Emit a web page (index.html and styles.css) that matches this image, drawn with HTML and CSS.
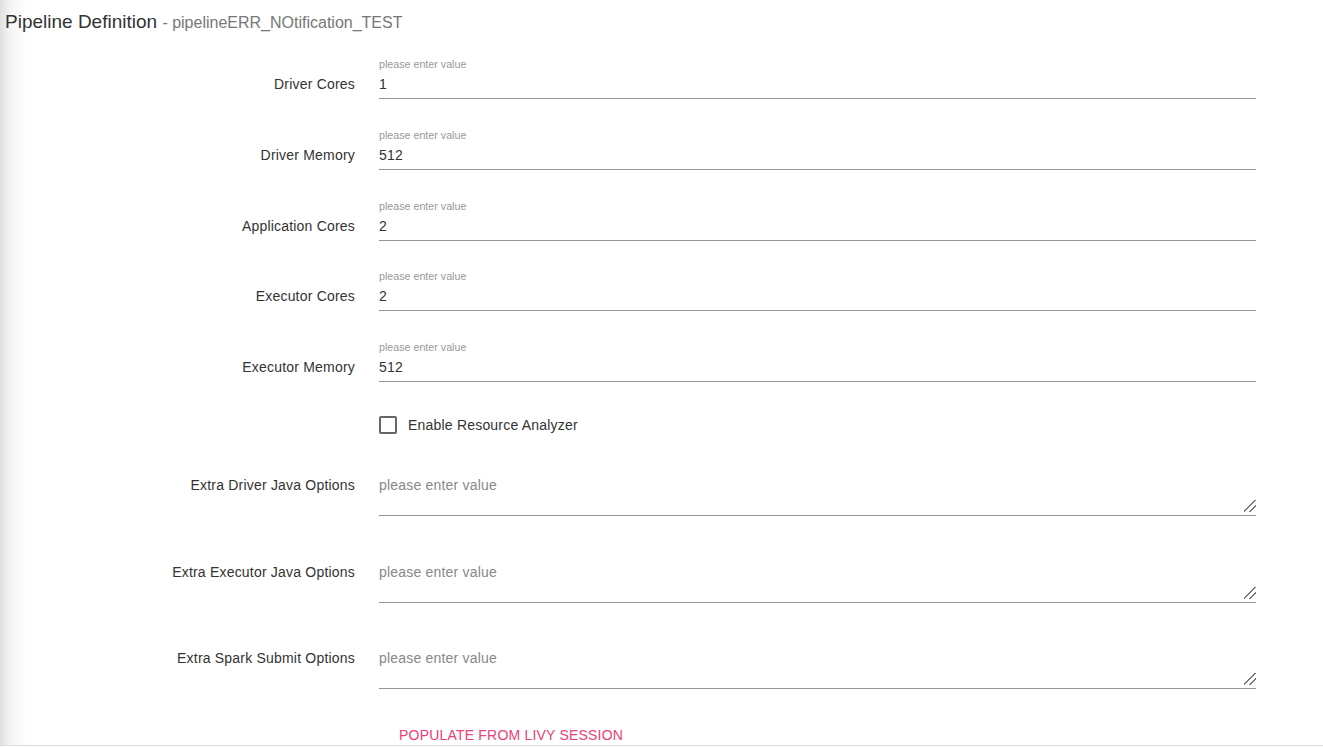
FILE: index.html
```html
<!DOCTYPE html>
<html>
<head>
<meta charset="utf-8">
<link rel="stylesheet" href="styles.css">
</head>
<body>
<div class="page">
  <div class="main">
    <h1 class="title">Pipeline Definition <span class="subtitle">- pipelineERR_NOtification_TEST</span></h1>
    <div class="form">
      <div class="row">
        <label class="label">Driver Cores</label>
        <div class="field">
          <div class="helper">please enter value</div>
          <div class="input">1</div>
        </div>
      </div>
      <div class="row">
        <label class="label">Driver Memory</label>
        <div class="field">
          <div class="helper">please enter value</div>
          <div class="input">512</div>
        </div>
      </div>
      <div class="row">
        <label class="label">Application Cores</label>
        <div class="field">
          <div class="helper">please enter value</div>
          <div class="input">2</div>
        </div>
      </div>
      <div class="row">
        <label class="label">Executor Cores</label>
        <div class="field">
          <div class="helper">please enter value</div>
          <div class="input">2</div>
        </div>
      </div>
      <div class="row">
        <label class="label">Executor Memory</label>
        <div class="field">
          <div class="helper">please enter value</div>
          <div class="input">512</div>
        </div>
      </div>
      <div class="row check-row">
        <span></span>
        <div class="check">
          <span class="box"></span>
          <span class="check-label">Enable Resource Analyzer</span>
        </div>
      </div>
      <div class="row area-row">
        <label class="label area-label">Extra Driver Java Options</label>
        <div class="area"><span class="ph">please enter value</span><span class="grip"></span></div>
      </div>
      <div class="row area-row">
        <label class="label area-label">Extra Executor Java Options</label>
        <div class="area"><span class="ph">please enter value</span><span class="grip"></span></div>
      </div>
      <div class="row area-row">
        <label class="label area-label">Extra Spark Submit Options</label>
        <div class="area"><span class="ph">please enter value</span><span class="grip"></span></div>
      </div>
      <div class="row btn-row">
        <span></span>
        <div><button class="btn">POPULATE FROM LIVY SESSION</button></div>
      </div>
    </div>
  </div>
  <div class="footer"></div>
</div>
</body>
</html>
```

FILE: styles.css
```css
html, body {
  margin: 0;
  padding: 0;
}
body {
  font-family: "Liberation Sans", Arial, Helvetica, sans-serif;
  color: #333;
  background: #fff;
}
.page {
  height: 747px;
  display: flex;
  flex-direction: column;
  overflow: hidden;
  background: linear-gradient(to right, #e0e0e0 0px, #f4f4f4 10px, #fcfcfc 22px, #ffffff 34px);
}
.main {
  height: 745px;
  overflow: hidden;
  flex: none;
}
.footer {
  height: 1px;
  border-top: 1px solid #dcdcdc;
  box-sizing: content-box;
  background: #fff;
  flex: none;
}
.title {
  margin: 0;
  padding: 10px 0 0 5px;
  height: 24px;
  font-size: 19px;
  font-weight: 400;
  line-height: 24px;
  color: #333;
}
.subtitle {
  font-size: 16px;
  color: #777;
}
.form {
  margin-top: 23px;
  display: flex;
  flex-direction: column;
}
.row {
  display: grid;
  grid-template-columns: 355px 877px;
  column-gap: 24px;
  align-items: start;
  margin-bottom: 28.8px;
}
.label {
  text-align: right;
  font-size: 14px;
  letter-spacing: 0.2px;
  line-height: 29px;
  padding-top: 13px;
  color: #333;
}
.helper {
  font-size: 10.7px;
  line-height: 14px;
  height: 12px;
  color: #999;
}
.input {
  font-size: 14px;
  letter-spacing: 0.2px;
  padding-top: 1px;
  line-height: 28px;
  height: 28px;
  border-bottom: 1px solid #949494;
  color: #333;
}
.check-row {
  margin-top: -1px;
  margin-bottom: 32px;
}
.check {
  height: 30px;
  display: flex;
  align-items: center;
}
.box {
  width: 14px;
  height: 14px;
  border: 2px solid #666;
  border-radius: 2px;
  margin-right: 11px;
}
.check-label {
  font-size: 14px;
  letter-spacing: 0.2px;
  color: #333;
}
.area-row {
  margin-bottom: 42.6px;
}
.area-label {
  padding-top: 3px;
  line-height: 20px;
}
.area {
  position: relative;
  border-bottom: 1px solid #949494;
  padding-top: 3px;
  box-sizing: border-box;
  height: 44px;
}
.ph {
  font-size: 14px;
  letter-spacing: 0.2px;
  line-height: 20px;
  color: #888;
}
.grip {
  position: absolute;
  right: 0;
  bottom: 3px;
  width: 12px;
  height: 12px;
  background:
    linear-gradient(135deg, transparent 0 45%, #777 45% 52%, transparent 52% 70%, #777 70% 77%, transparent 77%);
}
.btn-row {
  margin-top: -15px;
  margin-bottom: 0;
}
.btn {
  font-family: "Liberation Sans", Arial, Helvetica, sans-serif;
  font-size: 14px;
  letter-spacing: 0.2px;
  color: #ec407a;
  background: none;
  border: none;
  padding: 8px 20px 0;
  line-height: 20px;
  cursor: pointer;
}
```
